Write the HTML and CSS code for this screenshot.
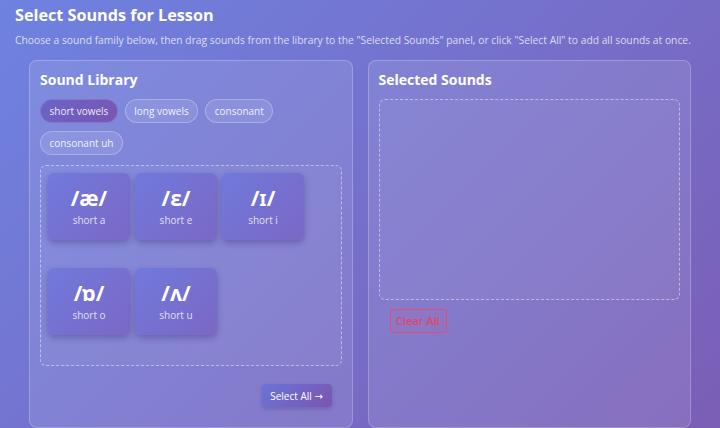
FILE: index.html
```html
<!DOCTYPE html>
<html>
<head>
<meta charset="utf-8">
<link rel="stylesheet" href="styles.css">
</head>
<body>
<div class="page">
  <h1 class="title">Select Sounds for Lesson</h1>
  <p class="subtitle">Choose a sound family below, then drag sounds from the library to the "Selected Sounds" panel, or click "Select All" to add all sounds at once.</p>
  <div class="panels">
    <section class="panel">
      <h2 class="panel-title">Sound Library</h2>
      <div class="chips">
        <span class="chip active">short vowels</span>
        <span class="chip">long vowels</span>
        <span class="chip">consonant</span>
        <span class="chip">consonant uh</span>
      </div>
      <div class="dropzone library">
        <div class="card"><div class="sym">/æ/</div><div class="lbl">short a</div></div>
        <div class="card"><div class="sym">/ɛ/</div><div class="lbl">short e</div></div>
        <div class="card"><div class="sym">/ɪ/</div><div class="lbl">short i</div></div>
        <div class="card"><div class="sym">/ɒ/</div><div class="lbl">short o</div></div>
        <div class="card"><div class="sym">/ʌ/</div><div class="lbl">short u</div></div>
      </div>
      <div class="actions">
        <button class="btn-primary">Select All <span class="arrow">→</span></button>
      </div>
    </section>
    <section class="panel">
      <h2 class="panel-title">Selected Sounds</h2>
      <div class="dropzone selected"></div>
      <div class="actions-left">
        <button class="btn-clear">Clear All</button>
      </div>
    </section>
  </div>
</div>
</body>
</html>
```

FILE: styles.css
```css
* { box-sizing: border-box; }
html, body { margin: 0; height: 100%; }
body {
  font-family: "Open Sans", "Noto Sans", sans-serif;
  background: linear-gradient(135deg, #6f82e0 0%, #7b5eb6 100%);
  color: #fff;
  overflow: hidden;
}
.page { padding: 4px 15px 0; }
.title {
  font-size: 16.2px;
  font-weight: 700;
  margin: 0;
  line-height: 22px;
}
.subtitle {
  margin: 6px 0 0;
  font-size: 10.3px;
  line-height: 16px;
  color: rgba(255,255,255,0.75);
}
.panels {
  display: grid;
  grid-template-columns: 1fr 1fr;
  gap: 15px;
  margin: 12px 14px 0;
}
.panel {
  background: rgba(255,255,255,0.1);
  border: 1px solid rgba(255,255,255,0.22);
  border-radius: 8px;
  padding: 9px 10px 20px;
  height: 368px;
}
.panel-title {
  margin: 0 0 9px;
  font-size: 14px;
  font-weight: 700;
  line-height: 20px;
}
.chips {
  display: flex;
  flex-wrap: wrap;
  gap: 8px 7px;
}
.chip {
  font-size: 10px;
  line-height: 22px;
  padding: 0 8.5px;
  border-radius: 12px;
  border: 1px solid rgba(255,255,255,0.25);
  background: rgba(255,255,255,0.1);
  color: rgba(255,255,255,0.9);
}
.chip.active {
  background: linear-gradient(135deg, #6a64c8, #7a55b2);
  border-color: rgba(255,255,255,0.15);
}
.dropzone {
  border: 1px dashed rgba(255,255,255,0.45);
  border-radius: 6px;
  background: rgba(255,255,255,0.04);
}
.library {
  margin-top: 10px;
  min-height: 201px;
  padding: 7px;
  display: flex;
  flex-wrap: wrap;
  gap: 5px;
}
.card {
  width: 82px;
  height: 67px;
  border-radius: 6px;
  background: linear-gradient(135deg, rgba(110,120,220,0.9), rgba(122,100,196,0.9));
  box-shadow: 0 3px 6px rgba(40,20,90,0.3);
  display: flex;
  flex-direction: column;
  align-items: center;
  justify-content: center;
}
.sym {
  font-size: 21px;
  font-weight: 700;
  line-height: 24px;
}
.lbl {
  margin-top: 3px;
  font-size: 10px;
  line-height: 14px;
  color: rgba(255,255,255,0.8);
}
.actions {
  display: flex;
  justify-content: flex-end;
  margin-top: 18px;
  padding-right: 10px;
}
.btn-primary {
  font-family: "Open Sans", sans-serif;
  font-size: 10px;
  color: #fff;
  border: none;
  border-radius: 4px;
  height: 23px;
  width: 70px;
  padding: 0;
  background: linear-gradient(135deg, #6a74d8, #7a55b0);
  box-shadow: 0 2px 4px rgba(40,20,90,0.2);
}
.arrow { font-family: "DejaVu Sans", sans-serif; font-size: 10px; }
.selected {
  margin-top: 8px;
  height: 201px;
}
.actions-left { padding: 8px 11px; }
.btn-clear {
  font-family: "Open Sans", sans-serif;
  font-size: 11px;
  font-weight: 600;
  color: #e0456a;
  background: rgba(255,80,100,0.08);
  border: 1px solid rgba(240,70,100,0.75);
  border-radius: 3px;
  height: 24px;
  width: 57px;
  padding: 0;
}
```
